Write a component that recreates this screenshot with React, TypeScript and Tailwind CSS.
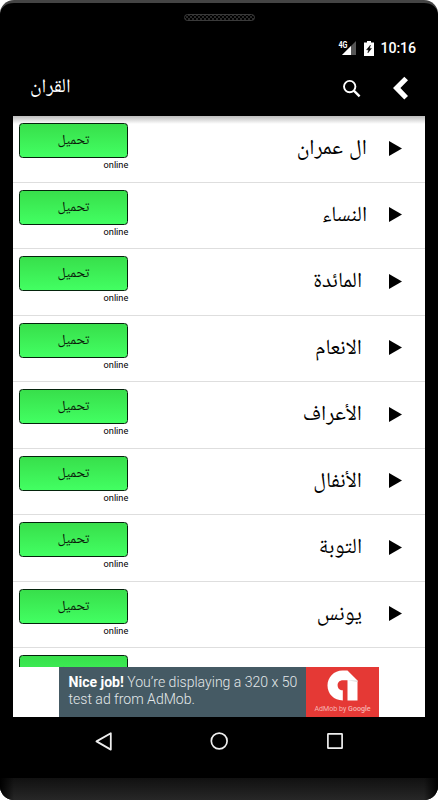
const ARABIC = "font-[Noto_Naskh_Arabic_UI,Noto_Naskh_Arabic,sans-serif]";

const rows = [
  { name: "ال عمران", pad: "mr-[14px]" },
  { name: "النساء", pad: "mr-[14px]" },
  { name: "المائدة", pad: "mr-[19px]" },
  { name: "الانعام", pad: "mr-[19px]" },
  { name: "الأعراف", pad: "mr-[19px]" },
  { name: "الأنفال", pad: "mr-[19px]" },
  { name: "التوبة", pad: "mr-[19px]" },
  { name: "يونس", pad: "mr-[19px]" },
];

function StatusBar() {
  return (
    <div className="flex h-[24px] items-center justify-end pr-[9px] text-white">
      <svg className="mr-[8px] h-[16px] w-[18px]" viewBox="0 0 18 16">
        <path d="M18 1V15H4Z" fill="#555" />
        <path d="M13 6V15H4Z" fill="#fff" />
        <text x="0.5" y="7.6" fontSize="8.6" fontWeight="700" fontFamily="Roboto" fill="#fff" stroke="#000" strokeWidth="1" paintOrder="stroke" textLength="9" lengthAdjust="spacingAndGlyphs">4G</text>
      </svg>
      <svg className="mr-[7px] h-[15px] w-[10px]" viewBox="0 0 10 15">
        <path d="M3 0H7V1.5H10V15H0V1.5H3Z" fill="#fff" />
        <path d="M6.5 4 2.5 8.8H4.6L3.8 12 7.5 7.4H5.5Z" fill="#000" stroke="#000" strokeWidth=".4" />
      </svg>
      <span className="text-[14.2px] font-medium leading-[16px] tracking-[-0.1px]">10:16</span>
    </div>
  );
}

function TitleBar() {
  return (
    <div className="flex h-[56px] items-center pl-[17px] text-white">
      <span dir="rtl" className={"text-[19.7px] leading-[24px] " + ARABIC}>القران</span>
      <svg className="ml-auto mr-[31px] h-[19px] w-[19px]" viewBox="0 0 19 19" fill="none" stroke="#fff">
        <circle cx="7.7" cy="7.6" r="5.7" strokeWidth="1.9" />
        <path d="M11.8 11.7 17.6 17.4" strokeWidth="2.4" />
      </svg>
      <svg className="mr-[16px] h-[24px] w-[17px]" viewBox="0 0 17 24">
        <path d="M12.3 .8 16 4.3 8.4 12 16 19.9 12.3 23.5 1 12Z" fill="#fff" />
      </svg>
    </div>
  );
}

function DownloadButton() {
  return (
    <div
      dir="rtl"
      className={
        "flex h-[35px] items-center justify-center rounded-[3.5px] border border-[#04240c] bg-gradient-to-b from-[#38df4b] to-[#42ff62] pt-[1px] text-[13.9px] leading-[20px] text-[#0a1a0a] " +
        ARABIC
      }
    >
      تحميل
    </div>
  );
}

function Row({ name, pad }: { name: string; pad: string }) {
  return (
    <div className="flex h-[66.5px] shrink-0 border-b border-[#dedede] pl-[5.5px] pt-[7px]">
      <div className="w-[109.8px]">
        <DownloadButton />
        <div className="pt-[1px] text-right text-[9.2px] leading-[12px] text-black">online</div>
      </div>
      <div className="flex h-[50px] flex-1 items-center justify-end pr-[23px]">
        <span dir="rtl" className={"whitespace-nowrap pt-[2px] text-[21.5px] leading-[30px] text-black [word-spacing:1.5px] " + ARABIC + " " + pad}>
          {name}
        </span>
        <svg className="ml-[8px] h-[15px] w-[13px]" viewBox="0 0 13 15">
          <path d="M0 0 13 7.5 0 15Z" fill="#000" />
        </svg>
      </div>
    </div>
  );
}

function AdBanner() {
  return (
    <div className="ml-[46px] flex h-[50px] w-[320px] bg-[#455a64]">
      <div className="w-[247px] whitespace-nowrap pl-[9.5px] pt-[7px] text-[14.06px] font-light leading-[17px] text-[#e3e8ea]">
        <div><b className="font-bold text-white">Nice job!</b> You’re displaying a 320 x 50</div>
        <div>test ad from AdMob.</div>
      </div>
      <div className="flex w-[73px] flex-col items-center bg-[#e53935] pt-[3px]">
        <svg className="h-[31px] w-[31px] shrink-0" viewBox="0 0 31 31">
          <path d="M15.5 .5H20.5L30.5 10.5V30.5H20.5V10.3H16C12.5 10.3 10.6 12.5 10.6 15.3C10.6 18.4 12.7 20.3 15.8 20.3V30.5C7 30.5 .5 24 .5 15.6C.5 7.2 7 .5 15.5 .5Z" fill="#fff" />
          <path d="M20.5 10.3 30.5 10.5V12Z" fill="#ddd" />
        </svg>
        <div className="mt-[3px] whitespace-nowrap text-[7.1px] leading-[10px] text-[#f7b5b3]">AdMob by <span className="font-medium">Google</span></div>
      </div>
    </div>
  );
}

function NavBar() {
  return (
    <div className="flex h-[48px] shrink-0 items-center">
      <svg className="ml-[95px] h-[19px] w-[17px]" viewBox="0 0 17 19">
        <path d="M15.8 1.2V17.6L1.5 9.4Z" fill="none" stroke="#eee" strokeWidth="1.8" strokeLinejoin="round" />
      </svg>
      <svg className="ml-[98px] h-[18px] w-[18px]" viewBox="0 0 18 18">
        <circle cx="9.2" cy="9" r="7.9" fill="none" stroke="#eee" strokeWidth="1.7" />
      </svg>
      <svg className="ml-[99px] h-[16px] w-[16px]" viewBox="0 0 16 16">
        <rect x=".9" y=".9" width="14.2" height="14.2" rx=".4" fill="none" stroke="#eee" strokeWidth="1.7" />
      </svg>
    </div>
  );
}

export default function App() {
  return (
    <div className="h-[800px] w-[438px] overflow-hidden bg-white font-[Roboto,sans-serif]">
      <div className="flex h-[800px] flex-col overflow-hidden rounded-[14px] border-t-[3px] border-[#444] bg-black">
        <div className="flex h-[33px] shrink-0 justify-center pt-[11px]">
          <svg className="h-[7px] w-[71px]" viewBox="0 0 71 7">
            <defs>
              <pattern id="mesh" width="4" height="4" patternUnits="userSpaceOnUse">
                <path d="M0 0H2V2H4V4H2V2H0Z" fill="#2a2a2a" />
              </pattern>
            </defs>
            <rect x=".5" y=".5" width="70" height="6" rx="3" fill="url(#mesh)" stroke="#3a3a3a" />
          </svg>
        </div>
        <div className="mx-[13px] flex h-[681px] shrink-0 flex-col">
          <StatusBar />
          <TitleBar />
          <div className="flex h-[551px] shrink-0 flex-col overflow-hidden bg-white bg-gradient-to-b from-[#bdbdbd] to-white bg-[length:100%_8px] bg-no-repeat">
            {rows.map((row) => <Row key={row.name} {...row} />)}
            <div className="h-[66.5px] shrink-0 pl-[5.5px] pt-[7px]">
              <div className="w-[109.8px]"><DownloadButton /></div>
            </div>
          </div>
          <div className="h-[50px] shrink-0 bg-white"><AdBanner /></div>
        </div>
        <NavBar />
        <div className="mt-auto h-[22px] shrink-0 bg-gradient-to-b from-[#111] to-[#272727]">
          <div className="h-full bg-[linear-gradient(90deg,#000_0,transparent_14px,transparent_424px,#000_438px)]" />
        </div>
      </div>
    </div>
  );
}
